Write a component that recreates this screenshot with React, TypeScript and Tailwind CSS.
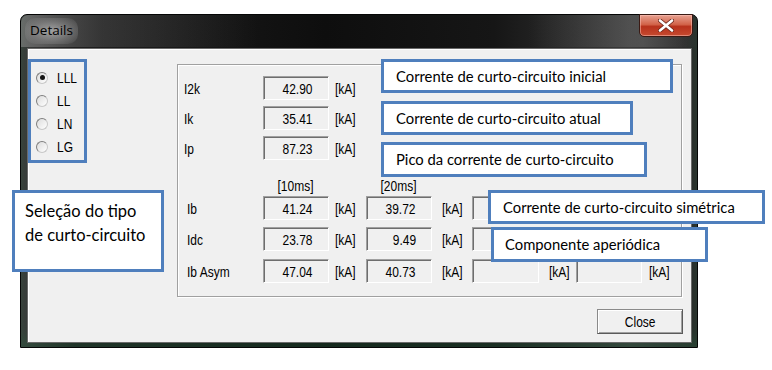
import React from "react";

const dlgFont = {
  fontFamily: "'Liberation Sans', Arial, sans-serif",
};

function N({ children, o = "origin-left" }: { children: React.ReactNode; o?: string }) {
  return <span className={`inline-block ${o} scale-x-[0.8] whitespace-nowrap`}>{children}</span>;
}

function Box({ v, w = "w-[66px]" }: { v?: string; w?: string }) {
  return (
    <div
      className={`${w} h-[24px] shrink-0 flex items-center justify-end pr-[15px] bg-[#f0f0f0] border border-t-[#a0a0a0] border-l-[#a0a0a0] border-r-[#ffffff] border-b-[#ffffff] shadow-[inset_1px_1px_0_#6e6e6e] text-[15px] leading-none text-black`}
    >
      {v && <N o="origin-right">{v}</N>}
    </div>
  );
}

function KA({ cls, hide }: { cls: string; hide?: boolean }) {
  return (
    <div className={`${cls} shrink-0 text-[15px] leading-none text-black ${hide ? "invisible" : ""}`}>
      <N>[kA]</N>
    </div>
  );
}

function Radio({ label, on }: { label: string; on?: boolean }) {
  return (
    <div className="h-[23px] flex items-center gap-[9px] pl-[5px]">
      <div className="w-[12px] h-[12px] rounded-full border border-[#7e7e7e] border-r-[#c8c8c8] border-b-[#c8c8c8] bg-gradient-to-br from-[#dcdcdc] to-[#ffffff] flex items-center justify-center">
        {on && <div className="w-[5px] h-[5px] rounded-full bg-[#151515]" />}
      </div>
      <span className="text-[15px] leading-none text-black">
        <N>{label}</N>
      </span>
    </div>
  );
}

function Callout({ cls, children }: { cls: string; children: React.ReactNode }) {
  return (
    <div
      className={`absolute bg-white border-[3px] border-[#4f7fbd] text-black ${cls}`}
      style={{ fontFamily: "Lato, 'Open Sans', sans-serif" }}
    >
      {children}
    </div>
  );
}

export default function App() {
  return (
    <div className="relative w-[772px] h-[370px] bg-white overflow-hidden pl-[20px] pt-[14px]">
      {/* Window */}
      <div className="w-[678px] h-[334px] flex flex-col rounded-t-[7px] border border-[#050505] bg-[linear-gradient(90deg,#3c3c3c_0%,#1e1e1e_8%,#0e0e0e_45%,#161616_70%,#3a3a3a_90%,#2a2a2a_100%)] shadow-[inset_0_-10px_14px_rgba(40,110,70,0.35)]">
        {/* Title bar */}
        <div className="h-[32px] flex items-start justify-between bg-[linear-gradient(90deg,rgba(150,150,150,0.5)_0%,rgba(110,110,110,0.3)_12%,rgba(0,0,0,0)_35%,rgba(0,0,0,0)_75%,rgba(140,140,140,0.3)_92%,rgba(0,0,0,0)_100%)] rounded-t-[7px]">
          <div className="ml-[4px] mt-[3px] px-[5px] py-[6px] rounded-[10px] bg-[radial-gradient(ellipse_at_center,rgba(175,175,175,0.85)_0%,rgba(140,140,140,0.5)_55%,rgba(0,0,0,0)_100%)]">
            <div
              className="text-[13.5px] leading-none text-black"
              style={{ fontFamily: "'Open Sans', 'Noto Sans', sans-serif" }}
            >
              Details
            </div>
          </div>
          <div className="mr-[4px] w-[54px] h-[23px] -mt-[1px] rounded-b-[5px] border border-[#3a1a14] bg-[linear-gradient(180deg,#e8a292_0%,#d2644a_45%,#b8321c_55%,#c54a30_100%)] flex items-center justify-center shadow-[inset_0_0_0_1px_rgba(255,200,190,0.5)]">
            <svg width="16" height="13" viewBox="0 0 16 13">
              <path d="M2 1.5 L14 11.5 M14 1.5 L2 11.5" stroke="#6b2418" strokeWidth="4.2" strokeLinecap="round" />
              <path d="M2 1.5 L14 11.5 M14 1.5 L2 11.5" stroke="#ffffff" strokeWidth="2.6" strokeLinecap="round" />
            </svg>
          </div>
        </div>

        {/* Client area */}
        <div
          className="ml-[6px] mr-[5px] mt-[1px] h-[295px] bg-[#f0f0f0] border border-[#6a6a6a] shadow-[inset_1px_1px_0_#ffffff] flex flex-col"
          style={dlgFont}
        >
          <div className="flex items-start">
            {/* Radio group */}
            <div className="ml-[0px] mt-[10px] w-[59px] h-[104px] border-[3px] border-[#4f7fbd] pt-[4px] shrink-0">
              <Radio label="LLL" on />
              <Radio label="LL" />
              <Radio label="LN" />
              <Radio label="LG" />
            </div>

            {/* Group box */}
            <div className="ml-[90px] mt-[15px] w-[505px] h-[233px] border border-[#a0a0a0] shadow-[inset_1px_1px_0_#ffffff,1px_1px_0_#ffffff] pt-[11px] shrink-0">
              {[
                ["I2k", "42.90"],
                ["Ik", "35.41"],
                ["Ip", "87.23"],
              ].map(([l, v], i) => (
                <div key={l} className={`flex items-center ${i > 0 ? "mt-[6px]" : ""}`}>
                  <div className="w-[85px] pl-[6px] shrink-0 text-[15px] leading-none text-black">
                    <N>{l}</N>
                  </div>
                  <Box v={v} />
                  <KA cls="pl-[6px]" />
                </div>
              ))}

              <div className="flex items-center mt-[18px] h-[14px] text-[15px] leading-none text-black">
                <div className="w-[85px] shrink-0" />
                <div className="w-[66px] text-center shrink-0">
                  <N o="origin-center">[10ms]</N>
                </div>
                <div className="w-[37px] shrink-0" />
                <div className="w-[66px] text-center shrink-0">
                  <N o="origin-center">[20ms]</N>
                </div>
              </div>

              {[
                ["Ib", "41.24", "39.72", "mt-[4px]", true],
                ["Idc", "23.78", "9.49", "mt-[7px]", true],
                ["Ib Asym", "47.04", "40.73", "mt-[8px]", false],
              ].map(([l, a, b, m, covered]) => (
                <div key={l as string} className={`flex items-center ${m}`}>
                  <div className="w-[85px] pl-[9px] shrink-0 text-[15px] leading-none text-black">
                    <N>{l}</N>
                  </div>
                  <Box v={a as string} />
                  <KA cls="w-[37px] pl-[6px]" />
                  <Box v={b as string} />
                  <KA cls="w-[40px] pl-[10px]" />
                  <Box w="w-[67px]" />
                  <KA cls="w-[37px] pl-[10px]" hide={covered as boolean} />
                  <Box />
                  <KA cls="pl-[7px]" hide={covered as boolean} />
                </div>
              ))}
            </div>
          </div>

          {/* Close button */}
          <div className="flex justify-end mt-[12px] mr-[8px]">
            <div className="w-[86px] h-[25px] border border-[#5a5a5a] border-t-[#8a8a8a] border-l-[#8a8a8a] shadow-[inset_1px_1px_0_#ffffff,inset_-1px_-1px_0_#a0a0a0] bg-[#f0f0f0] flex items-center justify-center text-[15px] leading-none text-black">
              <N o="origin-center">Close</N>
            </div>
          </div>
        </div>
      </div>

      {/* Annotation callouts */}
      <Callout cls="left-[381px] top-[59px] w-[292px] h-[34px] pl-[12px] flex items-center text-[14.8px]">
        Corrente de curto-circuito inicial
      </Callout>
      <Callout cls="left-[381px] top-[101px] w-[252px] h-[34px] pl-[12px] flex items-center text-[14.8px]">
        Corrente de curto-circuito atual
      </Callout>
      <Callout cls="left-[381px] top-[142px] w-[266px] h-[35px] pl-[12px] flex items-center text-[14.8px]">
        Pico da corrente de curto-circuito
      </Callout>
      <Callout cls="left-[488px] top-[190px] w-[277px] h-[34px] pl-[12px] flex items-center text-[14.8px]">
        Corrente de curto-circuito simétrica
      </Callout>
      <Callout cls="left-[491px] top-[227px] w-[217px] h-[35px] pl-[11px] flex items-center text-[14.8px]">
        Componente aperiódica
      </Callout>
      <Callout cls="left-[12px] top-[190px] w-[152px] h-[82px] pl-[10px] pt-[6px] leading-[24px] text-[16.5px]">
        <div>Seleção do tipo</div>
        <div>de curto-circuito</div>
      </Callout>
    </div>
  );
}
